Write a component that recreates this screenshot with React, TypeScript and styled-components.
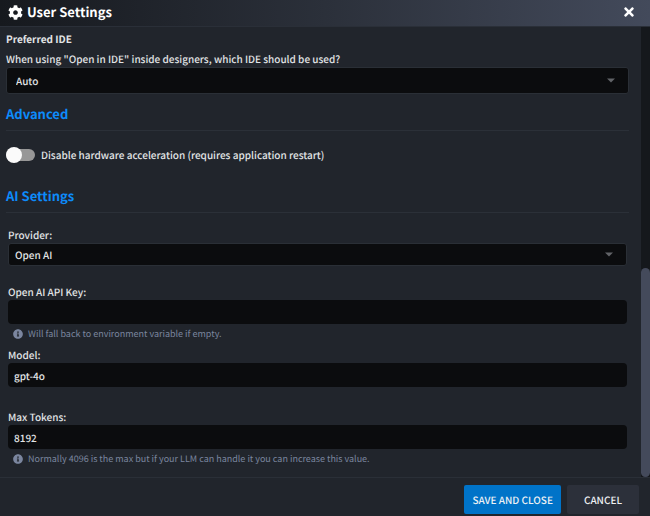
import React from "react";
import styled, { createGlobalStyle } from "styled-components";
import { FaCog, FaTimes, FaInfoCircle } from "react-icons/fa";

const GlobalStyle = createGlobalStyle`
  * { box-sizing: border-box; }
  body { margin: 0; background: #21252c; }
  body, button, input, select {
    font-family: "Noto Sans CJK SC", "Open Sans", sans-serif;
    text-rendering: geometricPrecision;
  }
`;

const Dialog = styled.div`
  display: flex;
  flex-direction: column;
  min-height: 100vh;
  background: #21252c;
  color: #e2e4e6;
  font-size: 10px;
  font-weight: 500;
  line-height: 16px;
`;

const Header = styled.header`
  display: flex;
  align-items: center;
  justify-content: space-between;
  height: 27px;
  padding: 0 14px 2px 8px;
  border-bottom: 1px solid #2a2f38;
  background: linear-gradient(90deg, #16191e 0%, #2b303a 50%, #434a5b 100%);
`;

const Title = styled.h1`
  display: flex;
  align-items: center;
  gap: 4px;
  margin: 0;
  color: #fff;
  font-size: 13px;
  font-weight: 700;
  line-height: 24px;
`;

const CloseButton = styled.button`
  display: flex;
  padding: 0;
  border: 0;
  background: none;
  color: #fff;
  font-size: 14px;
`;

const Body = styled.div`
  display: flex;
  flex: 1;
`;

const Content = styled.main`
  flex: 1;
  min-width: 0;
  padding: 4px 12px 10px 6px;
`;

const Track = styled.div`
  display: flex;
  flex-direction: column;
  justify-content: flex-end;
  width: 9px;
  background: #15181c;
`;

const Thumb = styled.div`
  flex: 0 0 46.5%;
  border-radius: 5px;
  background: #444a5b;
`;

const GroupTitle = styled.h3`
  margin: 0 0 4px;
  font-size: 10px;
  font-weight: 700;
  line-height: 16px;
`;

const SectionTitle = styled.h2<{ $gap: number }>`
  margin: ${(p) => p.$gap}px 0 0;
  padding-bottom: 6px;
  border-bottom: 1px solid #2b3038;
  color: #0d8bfb;
  font-size: 13px;
  font-weight: 700;
  line-height: 20px;
`;

const Label = styled.label`
  display: block;
`;

const SelectBox = styled.div`
  display: grid;
  align-items: center;

  > * { grid-area: 1 / 1; }

  svg {
    justify-self: end;
    margin-right: 14px;
    pointer-events: none;
  }
`;

const Select = styled.select<{ $tall?: boolean }>`
  appearance: none;
  width: 100%;
  height: ${(p) => (p.$tall ? 27 : 23)}px;
  padding: 0 ${(p) => (p.$tall ? 9 : 6)}px;
  border: 1px solid #2a2f36;
  border-radius: 3px;
  background: #0b0c0e;
  color: #e2e4e6;
  font-size: 10px;
  font-weight: 500;
`;

const ToggleRow = styled.label`
  display: flex;
  align-items: center;
  gap: 6px;
  margin-top: 16px;
`;

const Toggle = styled.input`
  appearance: none;
  display: flex;
  align-items: center;
  width: 29px;
  height: 12px;
  margin: 0;
  border-radius: 6px;
  background: #979797;

  &::before {
    content: "";
    width: 16px;
    height: 16px;
    border-radius: 50%;
    background: #fafafa;
  }

  &:checked { justify-content: flex-end; }
`;

const Fields = styled.div`
  padding: 14px 2px 0;
`;

const Field = styled.div<{ $gap: number }>`
  margin-bottom: ${(p) => p.$gap}px;
`;

const TextInput = styled.input`
  display: block;
  width: 100%;
  height: 24px;
  padding: 0 6px;
  border: 0;
  border-radius: 4px;
  background: #0b0c0e;
  color: #e2e4e6;
  font-size: 10px;
  font-weight: 500;
`;

const Hint = styled.p`
  display: flex;
  align-items: center;
  gap: 5px;
  margin: 2px 0 0;
  padding-left: 5px;
  color: #7b869f;
  font-size: 9px;
  font-weight: 400;
`;

const Footer = styled.footer`
  display: flex;
  justify-content: flex-end;
  gap: 6px;
  padding: 7px 11px 2px;
  border-top: 1px solid #2a2f37;
`;

const Button = styled.button<{ $primary?: boolean }>`
  height: 29px;
  padding: 0 ${(p) => (p.$primary ? 8 : 17)}px;
  border: 0;
  border-radius: 2px;
  background: ${(p) => (p.$primary ? "#0073c8" : "#2c303a")};
  color: #eef1f4;
  font-size: 10px;
  font-weight: 500;
`;

const Caret = () => (
  <svg width="8" height="5" viewBox="0 0 8 5" aria-hidden="true">
    <path d="M0 0.5h8L4 4.5z" fill="#626468" />
  </svg>
);

const InfoHint = ({ id, children }: { id: string; children: React.ReactNode }) => (
  <Hint id={id}>
    <FaInfoCircle size={10} aria-hidden="true" />
    {children}
  </Hint>
);

export default function App() {
  return (
    <>
      <GlobalStyle />
      <Dialog role="dialog" aria-labelledby="title">
        <Header>
          <Title id="title">
            <FaCog size={15} aria-hidden="true" />
            User Settings
          </Title>
          <CloseButton aria-label="Close">
            <FaTimes />
          </CloseButton>
        </Header>
        <Body>
          <Content>
            <GroupTitle>Preferred IDE</GroupTitle>
            <Label htmlFor="ide">
              When using "Open in IDE" inside designers, which IDE should be used?
            </Label>
            <SelectBox>
              <Select id="ide" $tall>
                <option>Auto</option>
              </Select>
              <Caret />
            </SelectBox>

            <SectionTitle $gap={10}>Advanced</SectionTitle>
            <ToggleRow>
              <Toggle type="checkbox" role="switch" />
              Disable hardware acceleration (requires application restart)
            </ToggleRow>

            <SectionTitle $gap={23}>AI Settings</SectionTitle>
            <Fields>
              <Field $gap={18}>
                <Label htmlFor="provider">Provider:</Label>
                <SelectBox>
                  <Select id="provider">
                    <option>Open AI</option>
                  </Select>
                  <Caret />
                </SelectBox>
              </Field>
              <Field $gap={5}>
                <Label htmlFor="key">Open AI API Key:</Label>
                <TextInput id="key" type="text" aria-describedby="key-hint" />
                <InfoHint id="key-hint">Will fall back to environment variable if empty.</InfoHint>
              </Field>
              <Field $gap={22}>
                <Label htmlFor="model">Model:</Label>
                <TextInput id="model" type="text" defaultValue="gpt-4o" />
              </Field>
              <Field $gap={0}>
                <Label htmlFor="tokens">Max Tokens:</Label>
                <TextInput id="tokens" type="text" defaultValue="8192" aria-describedby="tokens-hint" />
                <InfoHint id="tokens-hint">
                  Normally 4096 is the max but if your LLM can handle it you can increase this value.
                </InfoHint>
              </Field>
            </Fields>
          </Content>
          <Track>
            <Thumb />
          </Track>
        </Body>
        <Footer>
          <Button $primary>SAVE AND CLOSE</Button>
          <Button>CANCEL</Button>
        </Footer>
      </Dialog>
    </>
  );
}
